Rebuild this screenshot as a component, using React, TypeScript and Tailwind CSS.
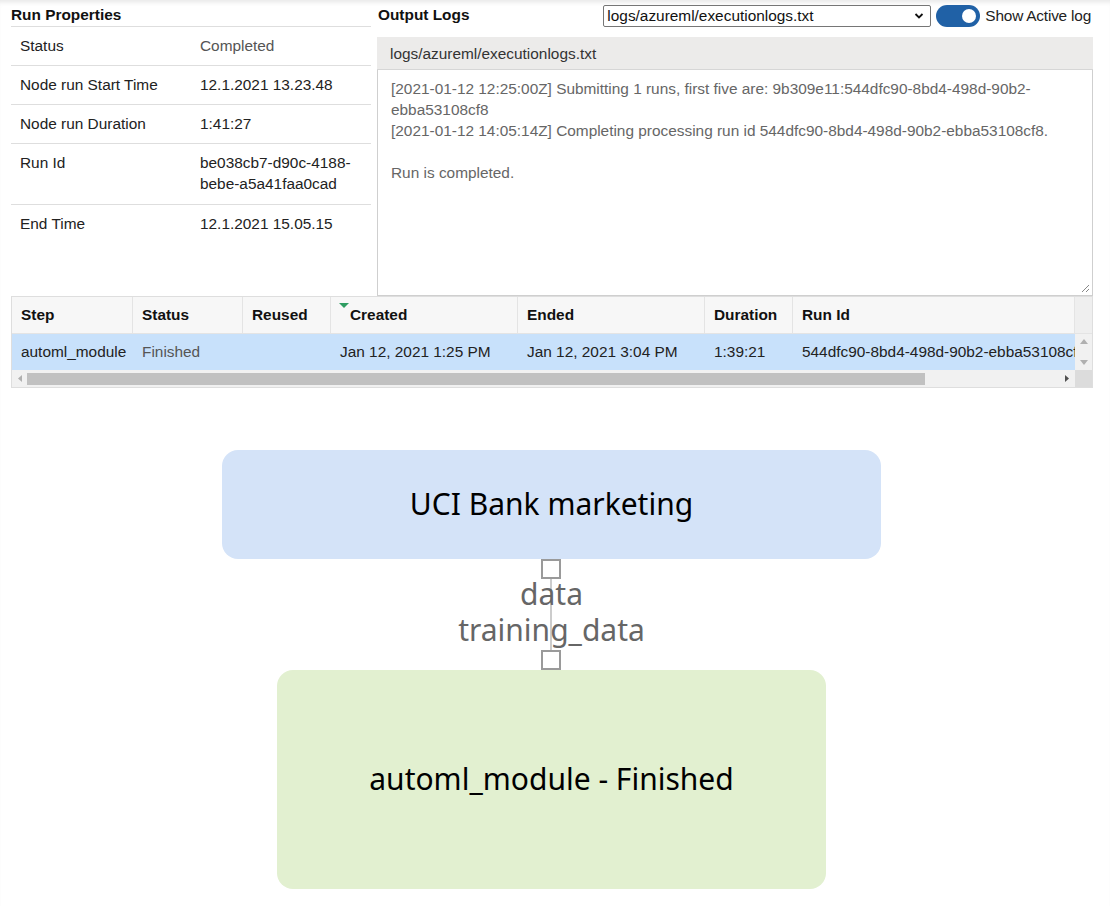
import { ReactNode } from "react";

const props: { label: string; value: string; muted?: boolean }[] = [
  { label: "Status", value: "Completed", muted: true },
  { label: "Node run Start Time", value: "12.1.2021 13.23.48" },
  { label: "Node run Duration", value: "1:41:27" },
  { label: "Run Id", value: "be038cb7-d90c-4188-bebe-a5a41faa0cad" },
  { label: "End Time", value: "12.1.2021 15.05.15" },
];

const cols = ["Step", "Status", "Reused", "Created", "Ended", "Duration", "Run Id"];

const Cell = ({ children, className = "" }: { children?: ReactNode; className?: string }) => (
  <div className={`flex items-center px-[9px] overflow-hidden whitespace-nowrap ${className}`}>
    {children}
  </div>
);

const Port = () => <div className="relative z-10 w-[20px] h-[20px] border-2 border-[#9a9a9a] bg-white" />;

export default function App() {
  return (
    <div
      className="w-[1110px] min-h-[906px] bg-white text-[15.4px] text-[#222] shadow-[inset_0_5px_5px_-3px_rgba(0,0,0,0.10)]"
      style={{ fontFamily: '"Liberation Sans", Arial, sans-serif' }}
    >
      <div className="pl-[11px] w-[1093px]">
        {/* top: properties + logs */}
        <div className="flex gap-[6px]">
          <div className="w-[360px] shrink-0">
            <div className="h-[27px] border-b border-[#dedede] pt-[5px] leading-[20px] font-bold text-[#111]">
              Run Properties
            </div>
            {props.map((p, i) => (
              <div
                key={p.label}
                className={`flex ${i < props.length - 1 ? "border-b border-[#dedede]" : ""} ${
                  p.label === "Run Id" ? "pt-[8px] pb-[10px] leading-[21px]" : "py-[9px] leading-[20px]"
                }`}
              >
                <div className="w-[189px] pl-[9px] shrink-0 text-[#222]">{p.label}</div>
                <div className={`flex-1 pr-[12px] ${p.muted ? "text-[#555]" : "text-[#222]"}`}>{p.value}</div>
              </div>
            ))}
          </div>

          <div className="flex-1 min-w-0">
            <div className="h-[37px] flex items-start">
              <div className="pt-[5px] pl-[1px] leading-[20px] font-bold text-[#111]">Output Logs</div>
              <div className="ml-auto flex items-center pt-[4px] gap-[5px]">
                <div className="w-[328px] h-[22px] border border-[#767676] rounded-[2px] flex items-center pl-[3px] pr-[6px] text-[#111]">
                  <span className="flex-1">logs/azureml/executionlogs.txt</span>
                  <svg width="10" height="8" viewBox="0 0 10 8">
                    <path d="M1.5 2 L5 5.5 L8.5 2" fill="none" stroke="#111" strokeWidth="1.8" />
                  </svg>
                </div>
                <div className="w-[44px] h-[22px] rounded-full bg-[#2061a6] flex items-center justify-end pr-[4px]">
                  <div className="w-[14px] h-[14px] rounded-full bg-white" />
                </div>
                <span className="text-[#222] tracking-[-0.2px] pr-[2px]">Show Active log</span>
              </div>
            </div>
            <div className="h-[33px] bg-[#ecebea] border-b border-[#d6d6d6] flex items-center pl-[13px] pt-[1px] text-[#333]">
              logs/azureml/executionlogs.txt
            </div>
            <div className="relative h-[226px] border border-t-0 border-[#cfcfcf] pl-[13px] pr-[40px] pt-[8px] leading-[21px] text-[#666]">
              <div>[2021-01-12 12:25:00Z] Submitting 1 runs, first five are: 9b309e11:544dfc90-8bd4-498d-90b2-ebba53108cf8</div>
              <div>[2021-01-12 14:05:14Z] Completing processing run id 544dfc90-8bd4-498d-90b2-ebba53108cf8.</div>
              <div>&nbsp;</div>
              <div>Run is completed.</div>
              <svg className="absolute right-[2px] bottom-[2px]" width="9" height="9" viewBox="0 0 9 9">
                <path d="M8 1 L1 8 M8 5 L5 8" stroke="#888" strokeWidth="1" />
              </svg>
            </div>
          </div>
        </div>

        {/* steps grid */}
        <div className="w-[1082px] border border-[#dedede]">
          <div className="grid grid-cols-[121px_110px_88px_187px_187px_88px_282px_17px] h-[37px] bg-[#f7f7f7] border-b border-[#e4e4e4] font-bold text-[#111]">
            {cols.map((c) => (
              <Cell key={c} className="relative border-r border-[#e4e4e4]">
                {c === "Created" && (
                  <span className="absolute left-[8px] top-[6px] w-0 h-0 border-l-[5px] border-r-[5px] border-t-[5px] border-l-transparent border-r-transparent border-t-[#2e9d62]" />
                )}
                <span className={c === "Created" ? "pl-[10px]" : ""}>{c}</span>
              </Cell>
            ))}
            <div className="bg-[#efefef]" />
          </div>
          <div className="grid grid-cols-[121px_110px_88px_187px_187px_88px_282px_17px] h-[36px] bg-[#c8e1fb]">
            <Cell className="text-[#222]">automl_module</Cell>
            <Cell className="text-[#555]">Finished</Cell>
            <Cell />
            <Cell className="text-[#222]">Jan 12, 2021 1:25 PM</Cell>
            <Cell className="text-[#222]">Jan 12, 2021 3:04 PM</Cell>
            <Cell className="text-[#222]">1:39:21</Cell>
            <Cell className="text-[#222] pr-0">544dfc90-8bd4-498d-90b2-ebba53108cf8</Cell>
            <div className="bg-[#f1f1f1] flex flex-col items-center justify-between py-[5px]">
              <svg width="8" height="5" viewBox="0 0 8 5">
                <path d="M0 5 L4 0 L8 5 Z" fill="#b0b0b0" />
              </svg>
              <svg width="8" height="5" viewBox="0 0 8 5">
                <path d="M0 0 L4 5 L8 0 Z" fill="#b0b0b0" />
              </svg>
            </div>
          </div>
          <div className="flex h-[17px] bg-[#f1f1f1]">
            <div className="flex-1 flex items-center">
              <div className="w-[15px] flex justify-center">
                <svg width="4" height="7" viewBox="0 0 4 7">
                  <path d="M4 0 L0 3.5 L4 7 Z" fill="#b0b0b0" />
                </svg>
              </div>
              <div className="w-[898px] h-[12px] bg-[#c1c1c1]" />
              <div className="flex-1 flex justify-end pr-[6px]">
                <svg width="4" height="7" viewBox="0 0 4 7">
                  <path d="M0 0 L4 3.5 L0 7 Z" fill="#505050" />
                </svg>
              </div>
            </div>
            <div className="w-[17px] bg-[#dcdcdc]" />
          </div>
        </div>
      </div>

      {/* pipeline graph */}
      <div
        className="w-[1103px] mt-[62px] flex flex-col items-center"
        style={{ fontFamily: '"Noto Sans", "Open Sans", sans-serif' }}
      >
        <div className="w-[659px] h-[109px] rounded-[16px] bg-[#d4e3f8] flex items-center justify-center pb-[3px] text-[30px] text-black">
          UCI Bank marketing
        </div>
        <div className="flex flex-col items-center">
          <Port />
          <div className="relative h-[71px] flex flex-col items-center">
            <div className="absolute left-1/2 -translate-x-1/2 top-0 bottom-0 w-[2px] bg-[#cccccc]" />
            <div className="relative -mt-[3px] text-[30px] leading-[36px] text-[#666] text-center">
              <div>data</div>
              <div>training_data</div>
            </div>
          </div>
          <Port />
        </div>
        <div className="w-[549px] h-[219px] rounded-[16px] bg-[#e2f0d0] flex items-center justify-center pb-[3px] text-[30px] text-black">
          automl_module - Finished
        </div>
      </div>
    </div>
  );
}
